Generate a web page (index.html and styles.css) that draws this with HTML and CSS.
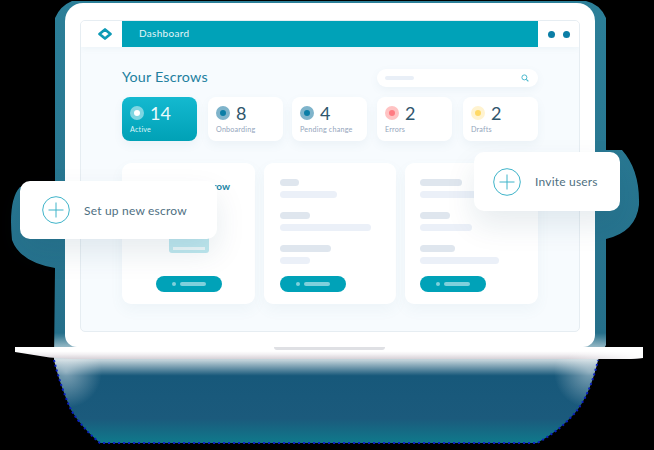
FILE: index.html
```html
<!DOCTYPE html>
<html lang="en">
<head>
    <meta charset="UTF-8">
    <meta name="viewport" content="width=device-width, initial-scale=1.0">
    <title>Your Escrows</title>
    <link rel="stylesheet" href="styles.css">
</head>
<body>
    <div class="scene">
        <!-- glow behind the laptop -->
        <svg class="halo" width="654" height="450" viewBox="0 0 654 450">
            <defs>
                <linearGradient id="haloFill" gradientUnits="userSpaceOnUse" x1="0" y1="0" x2="0" y2="450">
                    <stop offset="0" stop-color="#2c7f98"/>
                    <stop offset="0.74" stop-color="#256f8a"/>
                    <stop offset="0.775" stop-color="#8fb4c2"/>
                    <stop offset="0.80" stop-color="#c3d3da"/>
                    <stop offset="0.835" stop-color="#17587a"/>
                    <stop offset="0.93" stop-color="#1b5a7c"/>
                    <stop offset="0.985" stop-color="#0f7a8c"/>
                </linearGradient>
                <radialGradient id="cornerGlow">
                    <stop offset="0" stop-color="#fff" stop-opacity="0.45"/>
                    <stop offset="1" stop-color="#fff" stop-opacity="0"/>
                </radialGradient>
                <clipPath id="haloClip">
                    <path d="M72 1 H586 Q600 4 606 18 V150 H622 Q640 170 639 205 Q636 232 606 239 V345 L598 360 Q590 395 575 413 Q558 432 537 443 H100 Q82 428 71 410 Q60 385 54 360 L55 268 Q20 262 12 240 Q8 200 20 187 L55 182 V18 Q60 6 72 1 Z"/>
                </clipPath>
            </defs>
            <g clip-path="url(#haloClip)">
                <rect width="654" height="450" fill="url(#haloFill)"/>
                <circle cx="66" cy="372" r="36" fill="url(#cornerGlow)"/>
                <circle cx="590" cy="372" r="36" fill="url(#cornerGlow)"/>
            </g>
            <path class="halo-edge" d="M54 360 Q60 385 71 410 Q82 428 100 443 H537 Q558 432 575 413 Q590 395 598 360"/>
        </svg>

        <div class="laptop">
            <div class="screen">
                <div class="topbar">
                    <div class="topbar-logo">
                        <svg width="14" height="12" viewBox="0 0 14 12">
                            <path d="M7 1.500 12.500 6 7 10.500 1.500 6Z" fill="none" stroke="#0d9ab6" stroke-width="2.700" stroke-linejoin="round"/>
                        </svg>
                    </div>
                    <div class="topbar-title">Dashboard</div>
                    <div class="topbar-dots"><span></span><span></span></div>
                </div>

                <div class="content">
                    <div class="title-row">
                        <h1>Your Escrows</h1>
                        <div class="search">
                            <span class="search-line"></span>
                            <svg width="8" height="8" viewBox="0 0 8 8">
                                <circle cx="3.400" cy="3.400" r="2.500" fill="none" stroke="#4db9cd" stroke-width="1"/>
                                <path d="M5.300 5.300 7.400 7.400" stroke="#4db9cd" stroke-width="1.200"/>
                            </svg>
                        </div>
                    </div>

                    <div class="stats">
                        <div class="stat stat-active">
                            <div class="stat-top"><span class="dot dot-active"></span><b>14</b></div>
                            <div class="stat-label">Active</div>
                        </div>
                        <div class="stat">
                            <div class="stat-top"><span class="dot dot-blue"></span><b>8</b></div>
                            <div class="stat-label">Onboarding</div>
                        </div>
                        <div class="stat">
                            <div class="stat-top"><span class="dot dot-blue"></span><b>4</b></div>
                            <div class="stat-label">Pending change</div>
                        </div>
                        <div class="stat">
                            <div class="stat-top"><span class="dot dot-red"></span><b>2</b></div>
                            <div class="stat-label">Errors</div>
                        </div>
                        <div class="stat">
                            <div class="stat-top"><span class="dot dot-yellow"></span><b>2</b></div>
                            <div class="stat-label">Drafts</div>
                        </div>
                    </div>

                    <div class="cards">
                        <div class="card card-new">
                            <div class="card-new-title">Add a new escrow</div>
                            <div class="doc"><span></span></div>
                            <div class="btn"><i></i><em></em></div>
                        </div>
                        <div class="card">
                            <div class="line dark w19"></div>
                            <div class="line w57"></div>
                            <div class="line dark gap w30"></div>
                            <div class="line w91"></div>
                            <div class="line dark gap w51"></div>
                            <div class="line w30"></div>
                            <div class="btn"><i></i><em></em></div>
                        </div>
                        <div class="card card-last">
                            <div class="line dark w42"></div>
                            <div class="line w70"></div>
                            <div class="line dark gap w30"></div>
                            <div class="line w52"></div>
                            <div class="line dark gap w35"></div>
                            <div class="line w79"></div>
                            <div class="btn"><i></i><em></em></div>
                        </div>
                    </div>
                </div>
            </div>
        </div>

        <div class="base"><div class="notch"></div></div>

        <div class="float float-setup">
            <svg width="28" height="28" viewBox="0 0 28 28">
                <circle cx="14" cy="14" r="13.300" fill="none" stroke="#3fb4c9" stroke-width="1"/>
                <path d="M14 6.500V21.500M6.500 14H21.500" stroke="#3fb4c9" stroke-width="1"/>
            </svg>
            <span>Set up new escrow</span>
        </div>
        <div class="float float-invite">
            <svg width="28" height="28" viewBox="0 0 28 28">
                <circle cx="14" cy="14" r="13.300" fill="none" stroke="#3fb4c9" stroke-width="1"/>
                <path d="M14 6.500V21.500M6.500 14H21.500" stroke="#3fb4c9" stroke-width="1"/>
            </svg>
            <span>Invite users</span>
        </div>
    </div>
</body>
</html>
```

FILE: styles.css
```css
html, body {
    margin: 0;
    background: #000;
    font-family: "Lato", "Noto Sans", sans-serif;
}
.scene {
    position: relative;
    width: 654px;
    height: 450px;
    overflow: hidden;
    padding-top: 3px;
    box-sizing: border-box;
}
.halo {
    position: absolute;
    top: 0;
    left: 0;
}
.halo-edge {
    fill: none;
    stroke: #0b1fc4;
    stroke-width: 2;
    stroke-dasharray: 2 3;
}

/* Laptop */
.laptop {
    position: relative;
    box-sizing: border-box;
    width: 530px;
    height: 344px;
    margin-left: 65px;
    padding: 17px 15px 0;
    background: #fff;
    border-radius: 18px 18px 12px 12px;
}
.screen {
    box-sizing: border-box;
    height: 312px;
    background: #f7fbfe;
    border: 1px solid #e6edf2;
    border-radius: 5px;
    overflow: hidden;
}
.base {
    position: relative;
    display: flex;
    justify-content: center;
    width: 628px;
    height: 12px;
    margin-left: 15px;
    background:
        linear-gradient(90deg, rgba(255, 255, 255, 0) 88%, #fff),
        linear-gradient(#fff 35%, #f3f1f3 60%, #d6d1d7);
    clip-path: polygon(0 0, 100% 0, 100% 11px, 98% 12px, 9% 12px, 5.500% 10.500px, 0 5px);
}
.notch {
    width: 111px;
    height: 3px;
    background: #dfe0e4;
    border-radius: 0 0 4px 4px;
}

/* Top bar */
.topbar {
    display: flex;
    height: 26px;
    background: #fff;
    box-shadow: 0 2px 6px rgba(90, 130, 160, 0.06);
}
.topbar-logo {
    display: flex;
    align-items: center;
    justify-content: center;
    width: 47px;
    margin-right: -6px;
}
.topbar-title {
    flex: 1;
    padding-left: 17px;
    background: #00a2b8;
    color: #e4f6f8;
    font-size: 10px;
    line-height: 25px;
    letter-spacing: 0.300px;
}
.topbar-dots {
    display: flex;
    align-items: center;
    justify-content: center;
    gap: 8px;
    width: 41px;
}
.topbar-dots span {
    width: 7px;
    height: 7px;
    border-radius: 50%;
    background: #0b7ea6;
}

/* Content */
.content {
    padding: 22px 41px 0;
}
.title-row {
    display: flex;
    justify-content: space-between;
    align-items: center;
    height: 18px;
}
h1 {
    margin: 0 0 4px;
    color: #22809f;
    font-size: 14.300px;
    font-weight: 400;
    letter-spacing: 0.200px;
}
.search {
    display: flex;
    justify-content: space-between;
    align-items: center;
    box-sizing: border-box;
    width: 161px;
    height: 18px;
    padding: 0 9px 0 8px;
    background: #fff;
    border-radius: 9px;
    box-shadow: 0 3px 8px rgba(90, 130, 160, 0.07);
}
.search-line {
    width: 29px;
    height: 4px;
    background: #e9eff7;
    border-radius: 2px;
}

/* Stat tiles */
.stats {
    display: grid;
    grid-template-columns: 86px 84px 85px 86px 75px;
    margin-top: 10px;
}
.stat {
    box-sizing: border-box;
    width: 75px;
    height: 44px;
    padding: 8px 8px 0;
    background: #fff;
    border-radius: 8px;
    box-shadow: 0 4px 10px rgba(90, 130, 160, 0.07);
}
.stat-active {
    background: linear-gradient(#14b9d0, #00a1b6);
}
.stat-top {
    display: flex;
    align-items: center;
    gap: 6px;
    height: 16px;
}
.stat-top b {
    color: #2f566c;
    font-size: 18px;
    font-weight: 400;
}
.stat-active .stat-top b {
    color: #eafafc;
}
.stat-label {
    margin-top: 4px;
    color: #94a5bc;
    font-size: 7.200px;
    letter-spacing: 0.200px;
    white-space: nowrap;
}
.stat-active .stat-label {
    color: #dff5f8;
}
.dot {
    flex: none;
    box-sizing: border-box;
    width: 14px;
    height: 14px;
    border-radius: 50%;
    border: 4px solid;
}
.dot-active {
    background: #fff;
    border-color: #7fd6e2;
}
.dot-blue {
    background: #0b7ea6;
    border-color: #7fb4cb;
}
.dot-red {
    background: #ff7b82;
    border-color: #ffc3c3;
}
.dot-yellow {
    background: #ffd966;
    border-color: #fff3d0;
}

/* Cards */
.cards {
    display: grid;
    grid-template-columns: 133px 132px 133px;
    gap: 9px;
    margin-top: 22px;
}
.card {
    position: relative;
    box-sizing: border-box;
    height: 141px;
    padding: 16px 16px 0;
    background: #fff;
    border-radius: 9px;
    box-shadow: 0 6px 14px rgba(90, 130, 160, 0.06);
}
.card-last {
    padding-left: 15px;
}
.card-last .btn {
    left: 15px;
}
.line {
    height: 7px;
    margin-top: 5px;
    background: #ebf0f8;
    border-radius: 3.500px;
}
.line:first-child {
    margin-top: 0;
}
.line.dark {
    background: #dfe6ee;
}
.line.gap {
    margin-top: 14px;
}
.w19 { width: 19px; }
.w30 { width: 30px; }
.w35 { width: 35px; }
.w42 { width: 42px; }
.w51 { width: 51px; }
.w52 { width: 52px; }
.w57 { width: 57px; }
.w70 { width: 70px; }
.w79 { width: 79px; }
.w91 { width: 91px; }
.btn {
    position: absolute;
    left: 16px;
    bottom: 12px;
    display: flex;
    align-items: center;
    justify-content: center;
    gap: 4px;
    width: 66px;
    height: 16px;
    background: #00a2b8;
    border-radius: 8px;
}
.btn i {
    width: 4px;
    height: 4px;
    background: #7fd0dc;
    border-radius: 50%;
}
.btn em {
    width: 26px;
    height: 4px;
    background: #7fd0dc;
    border-radius: 2px;
}
.card-new {
    text-align: center;
}
.card-new .btn {
    left: 34px;
}
.card-new-title {
    margin-top: 1px;
    padding-left: 2px;
    color: #1a86a6;
    font-size: 10px;
    font-weight: 700;
    white-space: nowrap;
}
.doc {
    position: absolute;
    left: 47px;
    top: 50px;
    box-sizing: border-box;
    width: 40px;
    height: 40px;
    padding-top: 34px;
    background: #bfe8ef;
    border-radius: 3px;
}
.doc span {
    display: block;
    height: 3px;
    margin: 0 4px;
    background: #eaf7f9;
}

/* Floating cards */
.float {
    position: absolute;
    display: flex;
    align-items: center;
    box-sizing: border-box;
    background: #fff;
    border-radius: 10px;
    box-shadow: 0 14px 30px rgba(20, 70, 100, 0.10);
    color: #4f7082;
    font-size: 12px;
    letter-spacing: 0.200px;
}
.float-setup {
    left: 20px;
    top: 181px;
    width: 197px;
    height: 58px;
    padding-left: 22px;
    gap: 14px;
}
.float-invite {
    left: 474px;
    top: 152px;
    width: 146px;
    height: 59px;
    padding-left: 19px;
    gap: 14px;
}
```
